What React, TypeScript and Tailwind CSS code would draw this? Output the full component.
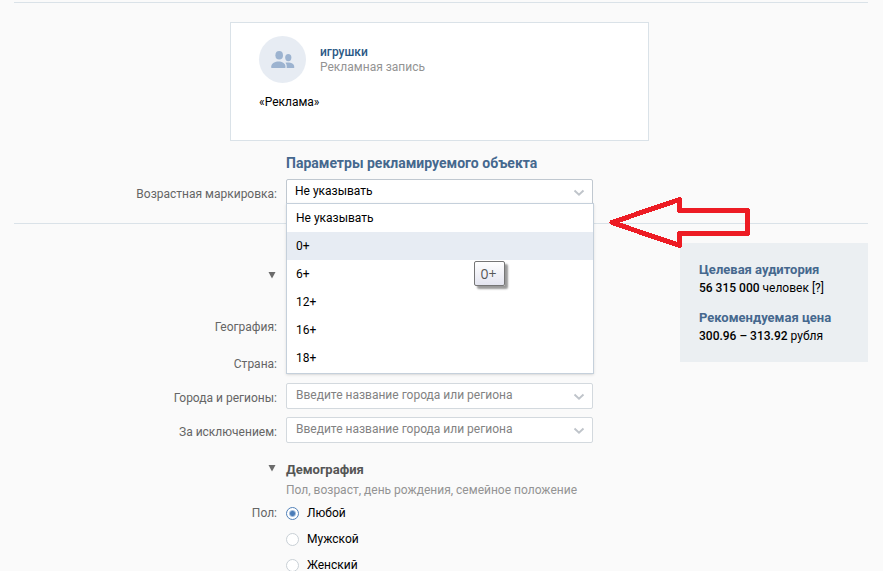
import React, { useState } from 'react';

const AGE_OPTIONS = ['Не указывать', '0+', '6+', '12+', '16+', '18+'];
const GENDERS = ['Любой', 'Мужской', 'Женский'];

function Chevron() {
  return (
    <svg className="pointer-events-none absolute top-2.5 right-2 h-2 w-3" viewBox="0 0 12 8" fill="none">
      <path d="M1.5 1.5L6 5.7L10.5 1.5" stroke="#bfc4ca" strokeWidth="1.9" />
    </svg>
  );
}

function Triangle() {
  return (
    <svg className="h-2 w-2" viewBox="0 0 8 8">
      <path d="M0.5 1H7.5L4 7.5Z" fill="#6b6b6b" />
    </svg>
  );
}

interface RegionFieldProps {
  id: string;
  label: string;
}

function RegionField({ id, label }: RegionFieldProps) {
  return (
    <div className="grid h-[34px] grid-cols-[263px_307px] gap-x-[9px]">
      <label htmlFor={id} className="pt-[7px] text-right text-[#656565]">
        {label}
      </label>
      <div className="relative h-[26px]">
        <input
          id={id}
          type="text"
          placeholder="Введите название города или региона"
          className="h-[26px] w-full rounded-xs border border-[#d3d9de] bg-white pr-7 pb-0.5 pl-[9px] placeholder:text-[#828282] focus:outline-none"
        />
        <Chevron />
      </div>
    </div>
  );
}

function AdPreview() {
  return (
    <div className="ml-[216px] h-[119px] w-[419px] border border-[#dae2e8] bg-white px-7 pt-[13px]">
      <div className="flex items-center gap-3.5">
        <div className="flex h-[47px] w-[47px] items-center justify-center rounded-full bg-[#e7ecf3]">
          <svg className="h-[18px] w-6" viewBox="0 0 24 18" fill="#9cb3d0">
            <ellipse cx="8.2" cy="4.3" rx="3.8" ry="4.3" />
            <path d="M0.3 17V15.3C0.3 12.1 4.3 10.4 7.6 10.4S14.4 12.1 14.4 15.3V17Z" />
            <ellipse cx="17.3" cy="6.6" rx="3.1" ry="3.6" />
            <path d="M15.7 17V15.3C15.7 13.8 15.2 12.6 14.4 11.8C18.1 10.9 23.2 12.1 23.2 15.3V17Z" />
          </svg>
        </div>
        <div className="leading-[15px]">
          <div className="font-medium text-[#2a5885]">игрушки</div>
          <div className="text-[#939393]">Рекламная запись</div>
        </div>
      </div>
      <p className="mt-[11px]">«Реклама»</p>
    </div>
  );
}

function AgeSelect() {
  const [age, setAge] = useState('Не указывать');
  const [hovered, setHovered] = useState('0+');

  return (
    <div className="relative h-[25px]">
      <select
        id="age"
        value={age}
        onChange={(e) => setAge(e.target.value)}
        className="h-[25px] w-full appearance-none rounded-t-xs border border-[#c0c8d0] bg-white pb-0.5 pl-2 focus:outline-none"
      >
        {AGE_OPTIONS.map((option) => (
          <option key={option}>{option}</option>
        ))}
      </select>
      <Chevron />

      {/* Opened list */}
      <ul
        role="listbox"
        className="absolute top-6 left-0 z-10 w-[308px] border border-[#c5d0db] bg-white pb-px shadow-sm"
      >
        {AGE_OPTIONS.map((option) => (
          <li
            key={option}
            role="option"
            aria-selected={option === age}
            onMouseEnter={() => setHovered(option)}
            onClick={() => setAge(option)}
            className={`h-7 cursor-pointer px-[9px] leading-7 ${option === hovered ? 'bg-[#e7ecf3]' : ''}`}
          >
            {option}
          </li>
        ))}
      </ul>

      {/* Native title tooltip */}
      <div
        role="tooltip"
        className="absolute top-[82px] left-[188px] z-20 flex h-[25px] w-[31px] items-center justify-center rounded-xs border border-[#767676] bg-linear-to-b from-white to-[#e4e5f0] pr-0.5 font-['Open_Sans',sans-serif] text-sm text-[#575757] shadow-[3px_3px_2px_rgba(0,0,0,0.4)]"
      >
        {hovered}
      </div>
    </div>
  );
}

function Audience() {
  return (
    <aside className="h-[119px] w-[188px] shrink-0 bg-[#ebeff2] px-[19px] pt-[17px] leading-[19px]">
      <h3 className="text-[13px] font-bold text-[#45688e]">Целевая аудитория</h3>
      <p>
        <b className="font-medium">56 315 000</b> человек <a href="#help">[?]</a>
      </p>
      <h3 className="mt-2.5 text-[13px] font-bold text-[#45688e]">Рекомендуемая цена</h3>
      <p>
        <b className="font-medium">300.96 – 313.92</b> рубля
      </p>
    </aside>
  );
}

export default function App() {
  const [gender, setGender] = useState('Любой');

  return (
    <div className="min-h-screen bg-[#fafafa] pt-0.5 pr-[15px] pl-3.5 font-[Roboto,sans-serif] text-xs leading-4 text-black">
      <section className="relative border-y border-[#dae2e8] pt-[19px] pb-[19px]">
        <AdPreview />
        <h2 className="mt-3.5 ml-[272px] text-sm leading-4 font-bold text-[#45688e]">
          Параметры рекламируемого объекта
        </h2>
        <div className="mt-2 grid grid-cols-[263px_307px] gap-x-[9px]">
          <label htmlFor="age" className="pt-[7px] text-right text-[#656565]">
            Возрастная маркировка:
          </label>
          <AgeSelect />
        </div>

        {/* Pointer to the age list */}
        <svg
          className="pointer-events-none absolute right-[117px] -bottom-7 z-30 h-14 w-[144px]"
          viewBox="0 0 144 56"
          fill="none"
          shapeRendering="crispEdges"
        >
          <path
            d="M72.5 4.5L5 27.5L72.5 50.5V38.5H140.5V15.5H72.5Z"
            stroke="#ed1c24"
            strokeWidth="5"
            strokeLinejoin="round"
          />
        </svg>
      </section>

      <div className="flex justify-between pt-[19px]">
        <div>
          <section>
            <button type="button" aria-label="Свернуть" className="mt-7 ml-[254px] block h-2 w-2">
              <Triangle />
            </button>
            <div className="mt-10 w-[263px] text-right text-[#656565]">География:</div>
            <div className="mt-[21px] mb-[11px] w-[263px] text-right text-[#656565]">Страна:</div>
            <RegionField id="cities" label="Города и регионы:" />
            <RegionField id="except" label="За исключением:" />
          </section>

          <section className="mt-[9px]">
            <div className="flex items-start gap-2.5">
              <button type="button" aria-label="Свернуть" className="mt-1 ml-[254px] block h-2 w-2">
                <Triangle />
              </button>
              <div>
                <h2 className="text-[13px] leading-5 font-bold text-[#555]">Демография</h2>
                <p className="leading-5 text-[#939393]">Пол, возраст, день рождения, семейное положение</p>
              </div>
            </div>
            <fieldset className="mt-[5px] grid grid-cols-[263px_307px] gap-x-[9px]">
              <div className="text-right text-[#656565]">Пол:</div>
              <div className="flex flex-col gap-2.5">
                {GENDERS.map((item) => (
                  <label key={item} className="flex items-center gap-2">
                    <input
                      type="radio"
                      name="gender"
                      checked={gender === item}
                      onChange={() => setGender(item)}
                      className="h-[13px] w-[13px] appearance-none rounded-full border border-[#c9d0d6] bg-white checked:border-[#5181b8] checked:bg-[radial-gradient(circle,#4a7cb8_2px,white_4px)]"
                    />
                    {item}
                  </label>
                ))}
              </div>
            </fieldset>
          </section>
        </div>
        <Audience />
      </div>
    </div>
  );
}
